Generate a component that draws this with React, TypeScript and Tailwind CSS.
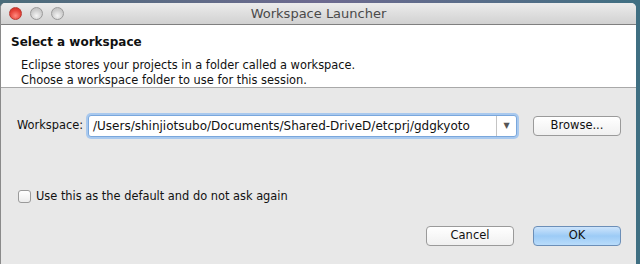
import React from "react";

const FONT = { fontFamily: '"DejaVu Sans", "Liberation Sans", sans-serif' };

function Light({ red }: { red?: boolean }) {
  return (
    <span
      className={
        red
          ? "h-[13px] w-[13px] rounded-full border border-[#b83a32] bg-[radial-gradient(circle_at_50%_70%,#ff8b80,#e8453b_55%,#c8281f)]"
          : "h-[13px] w-[13px] rounded-full border border-[#9a9a9a] bg-[radial-gradient(circle_at_50%_70%,#f4f4f4,#cfcfcf_55%,#b9b9b9)]"
      }
    />
  );
}

function Button({ label, primary }: { label: string; primary?: boolean }) {
  return (
    <button
      className={
        primary
          ? "flex h-[20px] w-[88px] items-center justify-center rounded-[4px] border border-[#6c8fb8] bg-gradient-to-b from-[#cde4fb] via-[#9ccbf6] to-[#b9dcfb] text-[11.5px] text-[#111]"
          : "flex h-[20px] w-[88px] items-center justify-center rounded-[4px] border border-[#9a9a9a] bg-gradient-to-b from-[#ffffff] to-[#f0f0f0] text-[11.5px] text-[#111]"
      }
    >
      {label}
    </button>
  );
}

export default function App() {
  return (
    <div
      className="flex h-[264px] w-[640px] flex-col overflow-hidden bg-gradient-to-r from-[#4a6c7a] via-[#6d6a90] to-[#3f6f82] pr-[4px] pt-[3px]"
      style={FONT}
    >
      <div className="flex flex-1 flex-col overflow-hidden rounded-t-[5px] border-l border-[#8a8a8a] bg-[#e8e8e8]">
        {/* title bar */}
        <div className="relative flex h-[22px] shrink-0 items-center border-b border-[#7f7f7f] bg-gradient-to-b from-[#ececec] to-[#d1d1d1] px-[8px]">
          <div className="flex gap-[8px]">
            <Light red />
            <Light />
            <Light />
          </div>
          <div className="absolute inset-0 flex items-center justify-center text-[13px] text-[#4a4a4a]">
            Workspace Launcher
          </div>
        </div>

        {/* header */}
        <div className="flex h-[63px] shrink-0 flex-col border-b border-[#a9a9a9] bg-white pl-[10px] pt-[10px] text-[#111]">
          <div className="text-[12px] font-bold leading-[15px]">Select a workspace</div>
          <div className="mt-[8px] pl-[10px] text-[11.4px] leading-[14.5px]">
            <div>Eclipse stores your projects in a folder called a workspace.</div>
            <div>Choose a workspace folder to use for this session.</div>
          </div>
        </div>

        {/* body */}
        <div className="flex flex-1 flex-col px-[15px] text-[11.4px] text-[#111]">
          <div className="mt-[27px] flex items-center">
            <span className="w-[72px] pl-[1px]">Workspace:</span>
            <div className="flex h-[22px] w-[429px] items-stretch rounded-[3px] border border-[#7aa7dc] bg-white shadow-[0_0_0_2px_#a9c9ee]">
              <span className="flex flex-1 items-center pl-[4px] text-[12px]">
                /Users/shinjiotsubo/Documents/Shared-DriveD/etcprj/gdgkyoto
              </span>
              <span className="flex w-[20px] items-center justify-center border-l border-[#c4c4c4] text-[8px] text-[#555]">
                ▼
              </span>
            </div>
            <div className="ml-auto">
              <Button label="Browse..." />
            </div>
          </div>

          <label className="mt-[51px] flex items-center gap-[5px] pl-[2px]">
            <span className="h-[13px] w-[13px] rounded-[3px] border border-[#9a9a9a] bg-gradient-to-b from-white to-[#ececec]" />
            <span>Use this as the default and do not ask again</span>
          </label>

          <div className="mt-[21px] flex justify-end gap-[19px]">
            <Button label="Cancel" />
            <Button label="OK" primary />
          </div>
        </div>
      </div>
    </div>
  );
}
